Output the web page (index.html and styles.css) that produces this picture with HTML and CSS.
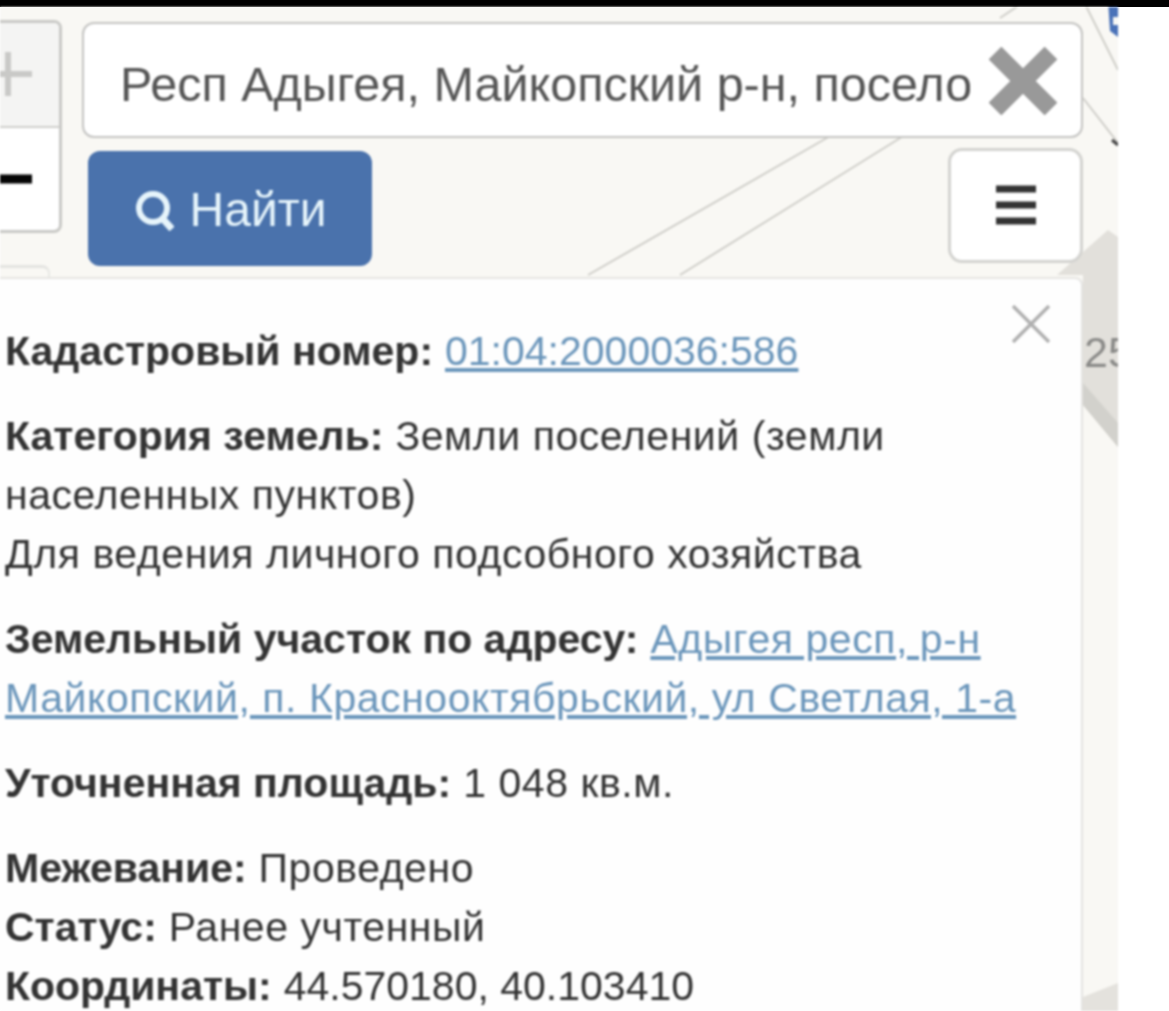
FILE: index.html
```html
<!DOCTYPE html>
<html lang="ru">
<head>
    <meta charset="UTF-8">
    <meta name="viewport" content="width=device-width, initial-scale=1.0">
    <title>Кадастровая карта</title>
    <link rel="stylesheet" href="styles.css">
</head>
<body>
    <div class="topbar"></div>
    <div class="mapa">
        <svg class="capa" viewBox="0 0 1118 1004" width="1118" height="1004">
            <g fill="none" stroke="#cfcec9" stroke-width="2">
                <path d="M588 268 L832 128"/>
                <path d="M680 268 L905 128"/>
                <path d="M1000 11 L1027 -7"/>
                <path d="M1083 -7 L1118 63"/>
                <path d="M1083 91 L1118 136"/>
            </g>
            <path d="M1057 268 L1108 223 L1118 230 L1118 440 L1083 398 L1083 268 Z" fill="#e2e0db"/>
            <path d="M1083 376 L1118 416 L1118 440 L1083 398 Z" fill="#d2d1cc"/>
            <path d="M1083 990 L1118 976 L1118 1004 L1083 1004 Z" fill="#e4e2dd"/>
            <path d="M1112 133 L1118 138" stroke="#444" stroke-width="3"/>
            <path d="M1108 -7 L1118 -7 L1118 10 L1113 10 L1113 18 L1118 18 L1118 30 L1110 24 Z" fill="#4a72b8"/>
            <text x="1084" y="360" class="num">25</text>
        </svg>

        <div class="controles">
            <div class="zoom">
                <div class="zoom_btn gris">
                    <svg width="60" height="60" viewBox="0 0 60 60"><path d="M6 30 H54 M30 8 V52" stroke="#c9c9c7" stroke-width="6" fill="none"/></svg>
                </div>
                <div class="zoom_btn">
                    <svg width="60" height="60" viewBox="0 0 60 60"><path d="M0 30 H54" stroke="#050505" stroke-width="9" fill="none"/></svg>
                </div>
            </div>

            <div class="busqueda">
                <div class="campo">
                    <input type="text" class="entrada" value="Респ Адыгея, Майкопский р-н, поселок Краснооктябрьский">
                    <svg class="limpiar" width="68" height="68" viewBox="0 0 68 68"><path d="M6 6 L62 62 M62 6 L6 62" stroke="#999" stroke-width="18" fill="none"/></svg>
                </div>
                <div class="acciones">
                    <button class="buscar" type="button">
                        <svg width="40" height="42" viewBox="0 0 40 42"><circle cx="19" cy="19" r="14" fill="none" stroke="#e6f4fb" stroke-width="6"/><path d="M28 29 L38 40" stroke="#e6f4fb" stroke-width="7" fill="none"/></svg>
                        Найти
                    </button>
                    <button class="menu" type="button" aria-label="Меню">
                        <svg width="42" height="42" viewBox="0 0 42 42"><path d="M1 4 H41 M1 20 H41 M1 36 H41" stroke="#333" stroke-width="7" fill="none"/></svg>
                    </button>
                </div>
            </div>
        </div>

        <div class="pestana"></div>

        <div class="panel">
            <svg class="cerrar" width="38" height="38" viewBox="0 0 38 38"><path d="M1 1 L37 37 M37 1 L1 37" stroke="#b0b0b0" stroke-width="3.5" fill="none"/></svg>
            <p><b>Кадастровый номер:</b> <a class="cifra" href="#">01:04:2000036:586</a></p>
            <p><b>Категория земель:</b> Земли поселений (земли населенных пунктов)<br>Для ведения личного подсобного хозяйства</p>
            <p><b>Земельный участок по адресу:</b> <a href="#">Адыгея респ, р-н Майкопский, п. Краснооктябрьский, ул Светлая, 1-а</a></p>
            <p><b>Уточненная площадь:</b> 1 048 кв.м.</p>
            <p><b>Межевание:</b> Проведено<br><b>Статус:</b> Ранее учтенный<br><b>Координаты:</b> <span class="cifra">44.570180, 40.103410</span></p>
        </div>
    </div>
</body>
</html>
```

FILE: styles.css
```css
html, body {
    height: 1011px;
    overflow: hidden;
}

body {
    margin: 0;
    background-color: #ffffff;
    font-family: "Liberation Sans", Arial, sans-serif;
}

.topbar {
    height: 7px;
    background-color: #000000;
}

.mapa {
    position: relative;
    width: 1118px;
    height: 1004px;
    overflow: hidden;
    background-color: #f9f8f4;
    filter: blur(0.8px);
}

.capa {
    position: absolute;
    top: 0;
    left: 0;
}

.num {
    font-size: 43px;
    fill: #8a8a88;
}

.controles {
    position: relative;
    display: flex;
    align-items: flex-start;
    gap: 20px;
    padding-top: 13px;
    margin-left: -26px;
    width: 1109px;
}

.zoom {
    flex: none;
    width: 88px;
    height: 213px;
    box-sizing: border-box;
    display: flex;
    flex-direction: column;
    border: 3px solid #c9c9c6;
    border-radius: 8px;
    overflow: hidden;
    background-color: #ffffff;
}

.zoom_btn {
    flex: 1;
    display: flex;
    align-items: center;
    justify-content: center;
}

.zoom_btn svg {
    margin-right: 20px;
}

.zoom_btn.gris {
    background-color: #f4f4f3;
    border-bottom: 2px solid #cfcfcc;
}

.busqueda {
    flex: 1;
    padding-top: 2px;
}

.campo {
    position: relative;
}

.entrada {
    display: block;
    width: 100%;
    height: 116px;
    box-sizing: border-box;
    padding: 8px 111px 0 36px;
    border: 2px solid #c4c4c2;
    border-radius: 12px;
    outline: none;
    background-color: #ffffff;
    color: #555555;
    font-family: inherit;
    font-size: 48.5px;
}

.limpiar {
    position: absolute;
    top: 25px;
    right: 26px;
}

.acciones {
    display: flex;
    justify-content: space-between;
    align-items: flex-start;
    padding-left: 6px;
    margin-top: 13px;
}

.buscar {
    display: flex;
    align-items: center;
    justify-content: center;
    gap: 16px;
    width: 284px;
    height: 115px;
    padding: 2px 0 0;
    border: none;
    border-radius: 12px;
    background-color: #4a72ac;
    color: #e6f4fb;
    font-family: inherit;
    font-size: 48px;
}

.menu {
    display: flex;
    align-items: center;
    justify-content: center;
    width: 135px;
    height: 115px;
    margin-top: -3px;
    padding: 0;
    border: 3px solid #d3d3d0;
    border-radius: 14px;
    background-color: #ffffff;
}

.pestana {
    position: absolute;
    top: 258px;
    left: 0;
    width: 48px;
    height: 14px;
    border-top: 3px solid #e4e4e1;
    border-right: 2px solid #e8e8e5;
    border-radius: 0 8px 0 0;
}

.panel {
    position: absolute;
    top: 270px;
    left: 0;
    width: 1083px;
    height: 760px;
    box-sizing: border-box;
    padding: 43px 40px 0 5px;
    background-color: #fefefe;
    border-top: 2px solid #e6e5e2;
    border-right: 2px solid #e3e3e1;
    border-radius: 0 8px 0 0;
    color: #333333;
    font-size: 41px;
    line-height: 59px;
    letter-spacing: 0.55px;
}

.panel p {
    margin: 0 0 26px;
}

.panel b,
.panel .cifra {
    letter-spacing: 0;
}

.panel a {
    color: #6b96bb;
    text-decoration: underline;
}

.cerrar {
    position: absolute;
    top: 26px;
    right: 31px;
}
```
